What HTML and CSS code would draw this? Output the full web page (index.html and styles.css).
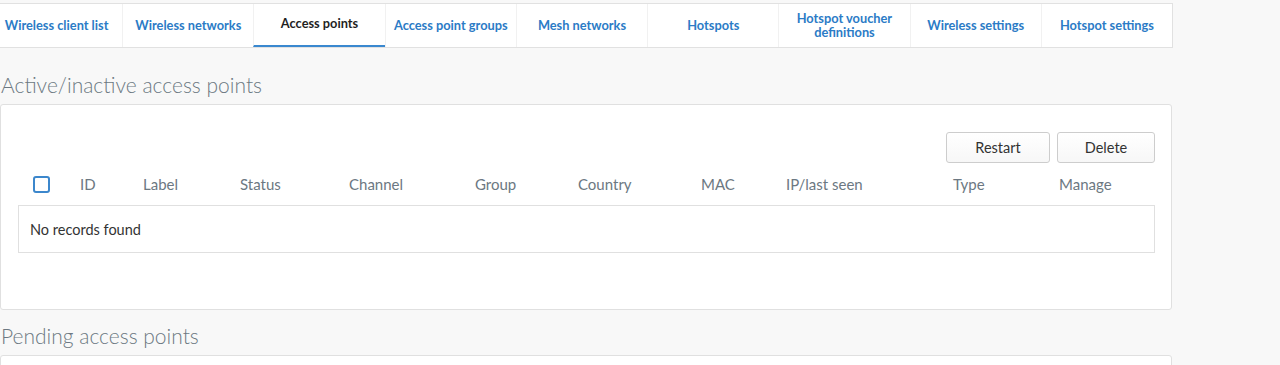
FILE: index.html
```html
<!DOCTYPE html>
<html>
	<head>
		<meta charset="UTF-8">
		<title>Access points</title>
		<link rel="stylesheet" href="styles.css">
	</head>
	<body>
		<div class="page">
			<ul class="tabs">
				<li><a href="javascript:;">Wireless client list</a></li>
				<li><a href="javascript:;">Wireless networks</a></li>
				<li class="active"><a href="javascript:;">Access points</a></li>
				<li><a href="javascript:;">Access point groups</a></li>
				<li><a href="javascript:;">Mesh networks</a></li>
				<li><a href="javascript:;">Hotspots</a></li>
				<li class="narrow"><a href="javascript:;">Hotspot voucher definitions</a></li>
				<li><a href="javascript:;">Wireless settings</a></li>
				<li><a href="javascript:;">Hotspot settings</a></li>
			</ul>

			<h2 class="title">Active/inactive access points</h2>
			<div class="panel">
				<div class="actions">
					<button class="btn">Restart</button>
					<button class="btn">Delete</button>
				</div>
				<div class="grid-head">
					<span class="cell"><span class="check"></span></span>
					<span class="cell">ID</span>
					<span class="cell">Label</span>
					<span class="cell">Status</span>
					<span class="cell">Channel</span>
					<span class="cell">Group</span>
					<span class="cell">Country</span>
					<span class="cell">MAC</span>
					<span class="cell">IP/last seen</span>
					<span class="cell">Type</span>
					<span class="cell">Manage</span>
				</div>
				<div class="grid-body">No records found</div>
			</div>

			<h2 class="title second">Pending access points</h2>
			<div class="panel pending"></div>
		</div>
	</body>
</html>
```

FILE: styles.css
```css
*{
	margin:0;
	padding:0;
	box-sizing:border-box;
}
body{
	background:#f8f8f8;
	font-family:Lato, "Open Sans", sans-serif;
	color:#333;
	overflow:hidden;
}
.page{
	width:1172px;
	padding-top:3px;
}

/* tab bar */
.tabs{
	list-style:none;
	display:grid;
	grid-template-columns:repeat(9, minmax(0, 1fr));
	width:1183px;
	margin-left:-10px;
	height:45px;
	background:#fff;
	border:1px solid #e1e1e1;
}
.tabs li{
	display:flex;
	align-items:center;
	justify-content:center;
	text-align:center;
	border-left:1px solid #f1f1f1;
}
.tabs li.narrow{
	padding:0 12px;
}
.tabs li:first-child{
	border-left:none;
}
.tabs a{
	color:#2b7bc6;
	text-decoration:none;
	font-size:12.8px;
	font-weight:700;
	line-height:14px;
	white-space:nowrap;
	margin-bottom:1px;
}
.tabs .narrow a{
	white-space:normal;
}
.tabs .active{
	border-bottom:2px solid #3a88cf;
}
.tabs .active a{
	color:#1f1f1f;
	margin-bottom:3px;
}

/* section titles */
.title{
	font-size:21px;
	font-weight:300;
	color:#6c7882;
	line-height:24px;
	padding:25px 0 7px 1px;
}
.title.second{
	padding-top:14px;
	padding-bottom:7px;
}

.panel{
	background:#fff;
	border:1px solid #e0e0e0;
	border-radius:3px;
	padding:27px 16px 56px 17px;
}
.panel.pending{
	height:40px;
	padding:0;
}

.actions{
	display:flex;
	justify-content:flex-end;
	gap:7px;
}
.btn{
	height:31px;
	padding:0 10px;
	font-family:inherit;
	font-size:14.5px;
	color:#333;
	background:linear-gradient(#fff,#f7f7f7);
	border:1px solid #cdcdcd;
	border-radius:3px;
}
.btn:first-child{width:104px;}
.btn:last-child{width:98px;}

.grid-head{
	display:grid;
	grid-template-columns:62px 63px 97px 109px 126px 103px 123px 85px 167px 106px 1fr;
	align-items:center;
	height:42px;
	font-size:15px;
	color:#6c7882;
}
.cell{
	display:flex;
	align-items:center;
}
.check{
	width:17px;
	height:17px;
	margin-left:15px;
	border:2px solid #3c87cc;
	border-radius:3px;
}
.grid-body{
	height:48px;
	border:1px solid #e0e0e0;
	display:flex;
	align-items:center;
	padding-left:11px;
	font-size:14.5px;
	color:#333;
}
```
